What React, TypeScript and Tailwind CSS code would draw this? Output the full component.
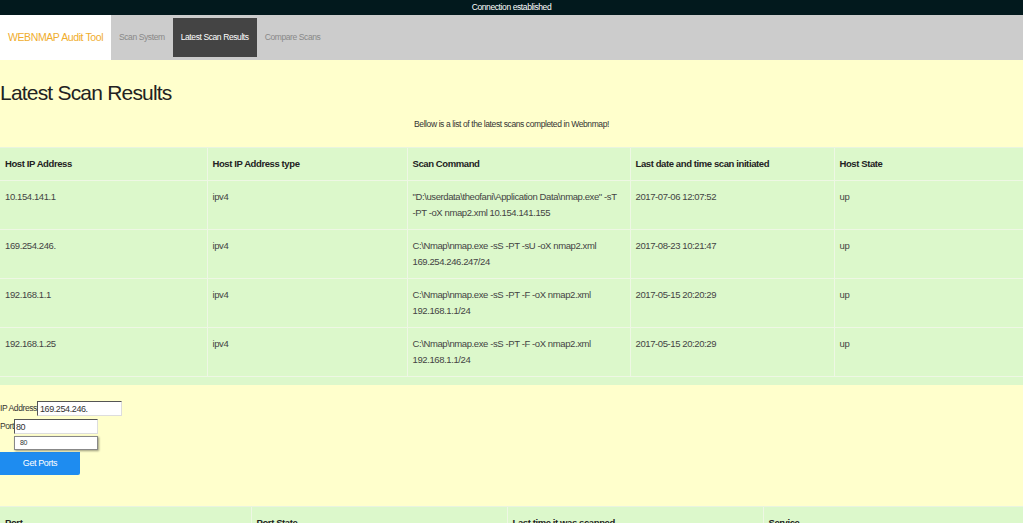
const NAV_ITEMS = [
  { label: 'Scan System', active: false },
  { label: 'Latest Scan Results', active: true },
  { label: 'Compare Scans', active: false },
];

const SCANS = [
  {
    ip: '10.154.141.1',
    type: 'ipv4',
    command: ['"D:\\userdata\\theofani\\Application Data\\nmap.exe" -sT', '-PT -oX nmap2.xml 10.154.141.155'],
    date: '2017-07-06 12:07:52',
    state: 'up',
  },
  {
    ip: '169.254.246.',
    type: 'ipv4',
    command: ['C:\\Nmap\\nmap.exe -sS -PT -sU -oX nmap2.xml', '169.254.246.247/24'],
    date: '2017-08-23 10:21:47',
    state: 'up',
  },
  {
    ip: '192.168.1.1',
    type: 'ipv4',
    command: ['C:\\Nmap\\nmap.exe -sS -PT -F -oX nmap2.xml', '192.168.1.1/24'],
    date: '2017-05-15 20:20:29',
    state: 'up',
  },
  {
    ip: '192.168.1.25',
    type: 'ipv4',
    command: ['C:\\Nmap\\nmap.exe -sS -PT -F -oX nmap2.xml', '192.168.1.1/24'],
    date: '2017-05-15 20:20:29',
    state: 'up',
  },
];

const font = "font-['Liberation_Sans',Arial,sans-serif]";
const th = 'font-bold px-[5px] py-2 border-r border-b border-[#eef7e4] whitespace-nowrap';
const td = 'px-[5px] py-2 border-r border-b border-[#eef7e4] whitespace-nowrap';

export default function App() {
  return (
    <div className={`min-h-screen bg-[#ffffcc] text-[#333] tracking-[-0.4px] ${font}`}>
      {/* Status bar */}
      <div className="h-[15px] bg-[#02191d] text-white text-[8.5px] leading-[15px] text-center">
        Connection established
      </div>

      {/* Nav */}
      <nav className="h-[45px] bg-[#cccccc] flex items-stretch">
        <div className="w-[111px] bg-white flex items-center pl-2 text-[10.5px] text-[#f0ad2e] whitespace-nowrap">
          WEBNMAP Audit Tool
        </div>
        <ul className="flex items-stretch py-[3px]">
          {NAV_ITEMS.map((item) => (
            <li
              key={item.label}
              className={`flex items-center px-2 text-[8.5px] whitespace-nowrap ${
                item.active ? 'bg-[#444] text-white' : 'text-[#888]'
              }`}
            >
              {item.label}
            </li>
          ))}
        </ul>
      </nav>

      {/* Main */}
      <main>
        <h1 className="text-[21px] leading-[26px] tracking-[-0.8px] pt-[20px] text-[#222]">Latest Scan Results</h1>
        <p className="text-center text-[8.5px] leading-4 mt-[10px]">
          Bellow is a list of the latest scans completed in Webnmap!
        </p>

        <div className="mt-[15px] bg-[#dcf8cb] border-t border-[#e9f4df] pb-2">
          <table className="w-full table-fixed border-collapse text-[9.5px] leading-4">
            <colgroup>
              <col className="w-[207px]" />
              <col className="w-[200px]" />
              <col className="w-[223px]" />
              <col className="w-[204px]" />
              <col />
            </colgroup>
            <thead>
              <tr className="text-left text-[#222]">
                <th className={th}>Host IP Address</th>
                <th className={th}>Host IP Address type</th>
                <th className={th}>Scan Command</th>
                <th className={th}>Last date and time scan initiated</th>
                <th className={`${th} border-r-0`}>Host State</th>
              </tr>
            </thead>
            <tbody className="text-[#444]">
              {SCANS.map((s) => (
                <tr key={s.ip} className="align-top">
                  <td className={td}>{s.ip}</td>
                  <td className={td}>{s.type}</td>
                  <td className={td}>
                    {s.command[0]}
                    <br />
                    {s.command[1]}
                  </td>
                  <td className={td}>{s.date}</td>
                  <td className={`${td} border-r-0`}>{s.state}</td>
                </tr>
              ))}
            </tbody>
          </table>
        </div>

        {/* Port lookup form */}
        <form className="mt-4 text-[8.5px] text-[#333]">
          <div className="flex items-center h-[15px]">
            <label>IP Address</label>
            <input
              readOnly
              value="169.254.246."
              className="w-[85px] h-[15px] bg-white px-[2px] text-[9px] tracking-[-0.4px] border border-t-[#555] border-l-[#555] border-r-[#ddd] border-b-[#ddd] outline-none"
            />
          </div>
          <div className="flex items-center h-[15px] mt-[3px]">
            <label>Port</label>
            <div className="relative">
              <input
                readOnly
                value="80"
                className="w-[84px] h-[15px] bg-white px-[1px] text-[9px] tracking-[-0.4px] border border-t-[#555] border-l-[#555] border-r-[#ddd] border-b-[#ddd] outline-none"
              />
              <div className="absolute left-0 top-[17px] w-[84px] h-[14px] bg-white border border-[#888] shadow-[1px_1px_2px_rgba(0,0,0,0.4)] text-[7px] leading-[12px] px-[5px] z-10">
                80
              </div>
            </div>
          </div>
          <button
            type="button"
            className="mt-[18px] w-[80px] h-[23px] bg-[#1e8cf0] text-white text-[9px] tracking-[-0.4px] rounded-br-[2px] block"
          >
            Get Ports
          </button>
        </form>

        <div className="mt-[31px] bg-[#dcf8cb] border-t border-[#e9f4df]">
          <table className="w-full table-fixed border-collapse text-[9.5px] leading-4 text-[#222]">
            <colgroup>
              <col className="w-[251px]" />
              <col className="w-[256px]" />
              <col className="w-[256px]" />
              <col />
            </colgroup>
            <thead>
              <tr className="text-left">
                <th className="font-bold px-[5px] py-2 border-r border-[#eef7e4]">Port</th>
                <th className="font-bold px-[5px] py-2 border-r border-[#eef7e4]">Port State</th>
                <th className="font-bold px-[5px] py-2 border-r border-[#eef7e4]">Last time it was scanned</th>
                <th className="font-bold px-[5px] py-2">Service</th>
              </tr>
            </thead>
          </table>
        </div>
      </main>
    </div>
  );
}
